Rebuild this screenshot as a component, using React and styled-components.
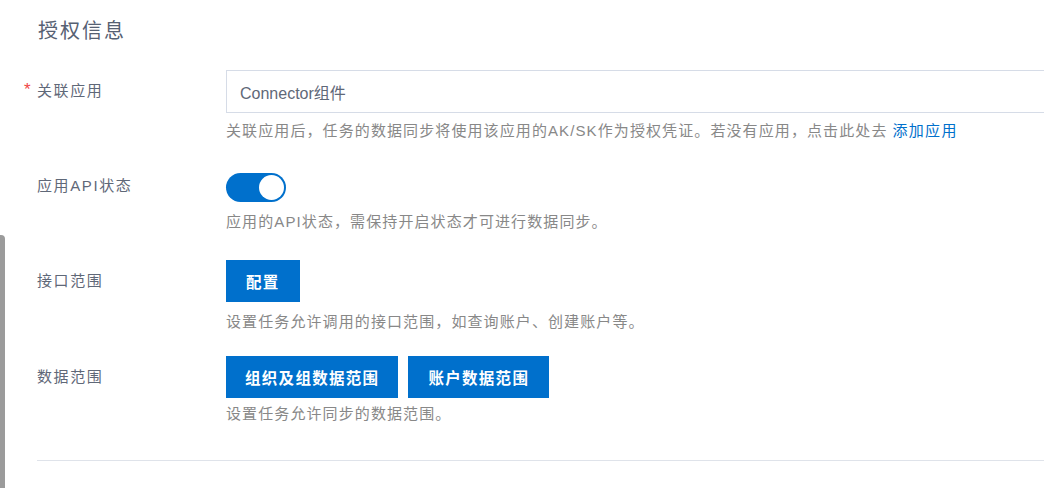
import React from 'react';
import styled, { createGlobalStyle } from 'styled-components';

const GlobalStyle = createGlobalStyle`
  html, body {
    margin: 0;
    padding: 0;
    background: #ffffff;
    overflow: hidden;
  }
  body {
    font-family: "Liberation Sans", Arial, "Noto Sans CJK SC", sans-serif;
  }
`;

const Page = styled.div`
  position: relative;
  width: 1044px;
  height: 488px;
  overflow: hidden;
`;

const EdgeBar = styled.div`
  position: absolute;
  left: 0;
  top: 235px;
  width: 5px;
  bottom: 0;
  background: #9b9b9b;
  border-top-right-radius: 4px;
`;

const Section = styled.div`
  width: 1100px;
  padding: 18px 0 0 37px;
`;

const Title = styled.h3`
  margin: 0 0 26px 1px;
  font-size: 20px;
  letter-spacing: 2px;
  line-height: 26px;
  font-weight: 400;
  color: #566072;
`;

const Field = styled.div`
  display: grid;
  grid-template-columns: 189px 1fr;
  align-items: center;
  row-gap: ${p => p.$hintGap}px;
  margin-bottom: ${p => p.$space}px;
`;

const Label = styled.label`
  position: relative;
  font-size: 15px;
  letter-spacing: 1.6px;
  color: #5f6878;
  margin-top: ${p => p.$shift ?? -4}px;

  ${p => p.$required && `
    &::before {
      content: '*';
      position: absolute;
      left: -13px;
      top: 1px;
      color: #f04646;
      font-size: 17px;
      letter-spacing: 0;
    }
  `}
`;

const Control = styled.div`
  display: flex;
  align-items: center;
  gap: 10px;
`;

const Input = styled.div`
  box-sizing: border-box;
  width: 100%;
  height: 43px;
  display: flex;
  align-items: center;
  padding-left: 13px;
  border: 1px solid #d6dce7;
  border-right: none;
  font-size: 16px;
  color: #5f6878;
  background: #fff;
`;

const Hint = styled.div`
  grid-column: 2;
  font-size: 15px;
  letter-spacing: 1.1px;
  line-height: 20px;
  color: #888888;
`;

const Link = styled.a`
  color: #0070cc;
  text-decoration: none;
  margin-left: 5px;
  letter-spacing: 1.3px;
`;

const Switch = styled.div`
  box-sizing: border-box;
  width: 60px;
  height: 29px;
  border-radius: 15px;
  background: #0070cc;
  padding: 2px;
  display: flex;
  justify-content: ${p => (p.$on ? 'flex-end' : 'flex-start')};
`;

const Knob = styled.span`
  width: 25px;
  height: 25px;
  border-radius: 50%;
  background: #fff;
`;

const Button = styled.button`
  height: 42px;
  padding: 0 ${p => p.$pad || 20}px;
  border: none;
  border-radius: 0;
  background: #0070cc;
  color: #fff;
  font-family: inherit;
  font-size: 15.5px;
  font-weight: 700;
  letter-spacing: 1.3px;
  cursor: pointer;
`;

const Divider = styled.hr`
  margin: 0;
  border: none;
  border-top: 1px solid #dfe3ea;
`;

export default function App() {
  return (
    <Page>
      <GlobalStyle />
      <EdgeBar />
      <Section>
        <Title>授权信息</Title>

        <Field $hintGap={8} $space={32}>
          <Label $required>关联应用</Label>
          <Control>
            <Input>Connector组件</Input>
          </Control>
          <Hint>
            关联应用后，任务的数据同步将使用该应用的AK/SK作为授权凭证。若没有应用，点击此处去
            <Link href="#">添加应用</Link>
          </Hint>
        </Field>

        <Field $hintGap={10} $space={28}>
          <Label $shift={-6}>应用API状态</Label>
          <Control>
            <Switch $on>
              <Knob />
            </Switch>
          </Control>
          <Hint>应用的API状态，需保持开启状态才可进行数据同步。</Hint>
        </Field>

        <Field $hintGap={10} $space={24}>
          <Label>接口范围</Label>
          <Control>
            <Button>配置</Button>
          </Control>
          <Hint>设置任务允许调用的接口范围，如查询账户、创建账户等。</Hint>
        </Field>

        <Field $hintGap={6} $space={36}>
          <Label>数据范围</Label>
          <Control>
            <Button $pad={19}>组织及组数据范围</Button>
            <Button>账户数据范围</Button>
          </Control>
          <Hint>设置任务允许同步的数据范围。</Hint>
        </Field>

        <Divider />
      </Section>
    </Page>
  );
}
